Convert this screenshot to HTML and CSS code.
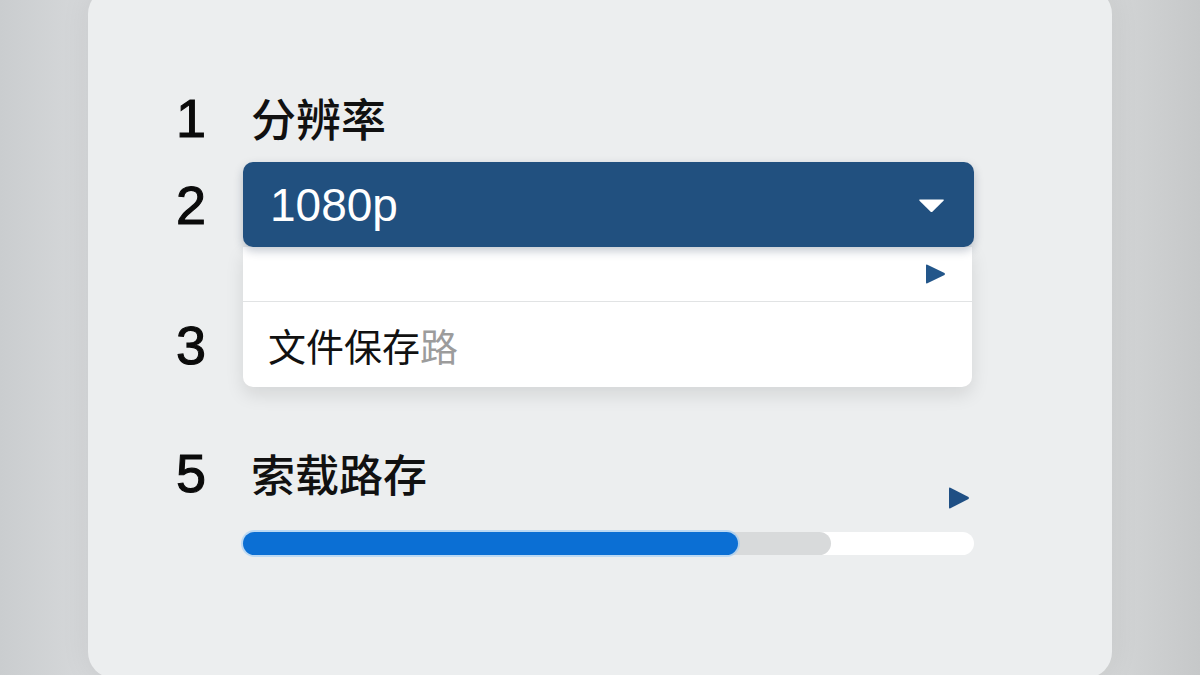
FILE: index.html
```html
<!DOCTYPE html>
<html lang="zh-CN">
<head>
  <meta charset="UTF-8">
  <title>设置</title>
  <link rel="stylesheet" href="styles.css">
</head>

<body>
  <div class="card">

    <div class="row">
      <span class="num">1</span>
      <span class="title">分辨率</span>
    </div>

    <div class="group">
      <div class="nums">
        <span class="num tall">2</span>
        <span class="spacer"></span>
        <span class="num tall">3</span>
      </div>

      <div class="select-wrap">
        <div class="select">
          <span class="select-value">1080p</span>
          <svg class="caret" width="27" height="15" viewBox="0 0 27 15">
            <path d="M2 1.5 H25 Q26.5 1.5 25.5 2.8 L14.6 13.6 Q13.5 14.6 12.4 13.6 L1.5 2.8 Q0.5 1.5 2 1.5 Z" fill="#ffffff"/>
          </svg>
        </div>
        <div class="menu">
          <div class="menu-item first">
            <svg class="play" width="22" height="22" viewBox="0 0 22 22">
              <path d="M2 2.5 Q2 1 3.4 1.7 L20.5 10 Q21.5 11 20.5 12 L3.4 20.3 Q2 21 2 19.5 Z" fill="#23568a"/>
            </svg>
          </div>
          <div class="menu-item">
            <span class="menu-text">文件保存<span class="muted">路</span></span>
          </div>
        </div>
      </div>
    </div>

    <div class="row row-five">
      <span class="num">5</span>
      <span class="title">索载路存</span>
      <svg class="play end" width="23" height="24" viewBox="0 0 23 24">
        <path d="M2 2.5 Q2 1 3.4 1.7 L21.5 11 Q22.5 12 21.5 13 L3.4 22.3 Q2 23 2 21.5 Z" fill="#1f4f84"/>
      </svg>
    </div>

    <div class="progress">
      <div class="track">
        <div class="buffer" style="width: 80.5%;">
          <div class="fill" style="width: 84.2%;"></div>
        </div>
      </div>
    </div>

  </div>
</body>
</html>
```

FILE: styles.css
```css
body
{
  margin: 0;
  height: 675px;
  overflow: hidden;
  background: linear-gradient(90deg, #cacdcf 0%, #d6d8da 7.3%, #dfe1e2 50%, #d3d5d6 92.7%, #c6c8c9 100%);
  font-family: "Liberation Sans", "Noto Sans CJK SC", sans-serif;
}
.card
{
  box-sizing: border-box;
  width: 1024px;
  height: 690px;
  margin: -12px 0 0 88px;
  padding: 102px 0 0 88px;
  border-radius: 26px;
  background: #eceeef;
  box-shadow: 0 0 30px rgba(0, 0, 0, 0.07);
}
.row
{
  display: flex;
  align-items: center;
  width: 798px;
  height: 56px;
}
.num
{
  display: flex;
  align-items: center;
  width: 67px;
  font-size: 54px;
  line-height: 56px;
  color: #0b0b0b;
  -webkit-text-stroke: 1.1px #0b0b0b;
}
.num.tall
{
  height: 85px;
}
.title
{
  padding-left: 8px;
  font-family: "Noto Sans CJK SC", sans-serif;
  font-size: 45px;
  font-weight: 500;
  line-height: 56px;
  color: #111;
}
.row-five .title
{
  font-size: 44px;
}
.group
{
  display: flex;
  margin-top: 16px;
}
.nums
{
  display: flex;
  flex-direction: column;
}
.spacer
{
  height: 55px;
}
.select-wrap
{
  width: 731px;
}
.select
{
  display: flex;
  align-items: center;
  justify-content: space-between;
  height: 85px;
  padding: 0 29px 0 27px;
  border-radius: 10px;
  background: #21507f;
  box-shadow: 0 4px 10px rgba(20, 40, 70, 0.25);
  position: relative;
  z-index: 1;
}
.select-value
{
  font-size: 46px;
  color: #ffffff;
}
.caret
{
  margin-top: 2px;
}
.menu
{
  width: 729px;
  background: #ffffff;
  border-radius: 0 0 10px 10px;
  box-shadow: 0 8px 18px rgba(0, 0, 0, 0.10);
}
.menu-item
{
  display: flex;
  align-items: center;
  height: 85px;
  padding: 0 26px 0 25px;
}
.menu-item.first
{
  height: 54px;
  justify-content: flex-end;
  border-bottom: 1px solid #e1e3e4;
}
.menu-text
{
  font-family: "Noto Sans CJK SC", sans-serif;
  font-size: 38px;
  color: #111;
}
.muted
{
  color: #9c9c9c;
}
.row-five
{
  align-items: flex-start;
  height: 65px;
  margin-top: 58px;
}
.play.end
{
  align-self: flex-end;
  margin-left: auto;
  margin-right: 4px;
}
.progress
{
  width: 731px;
  margin: 22px 0 0 67px;
}
.track
{
  height: 23px;
  border-radius: 12px;
  background: #ffffff;
}
.buffer
{
  height: 23px;
  border-radius: 12px;
  background: #d8dadb;
}
.fill
{
  height: 23px;
  border-radius: 12px;
  background: #0b6fd4;
  box-shadow: 0 0 0 2px rgba(150, 200, 245, 0.55);
}
```
